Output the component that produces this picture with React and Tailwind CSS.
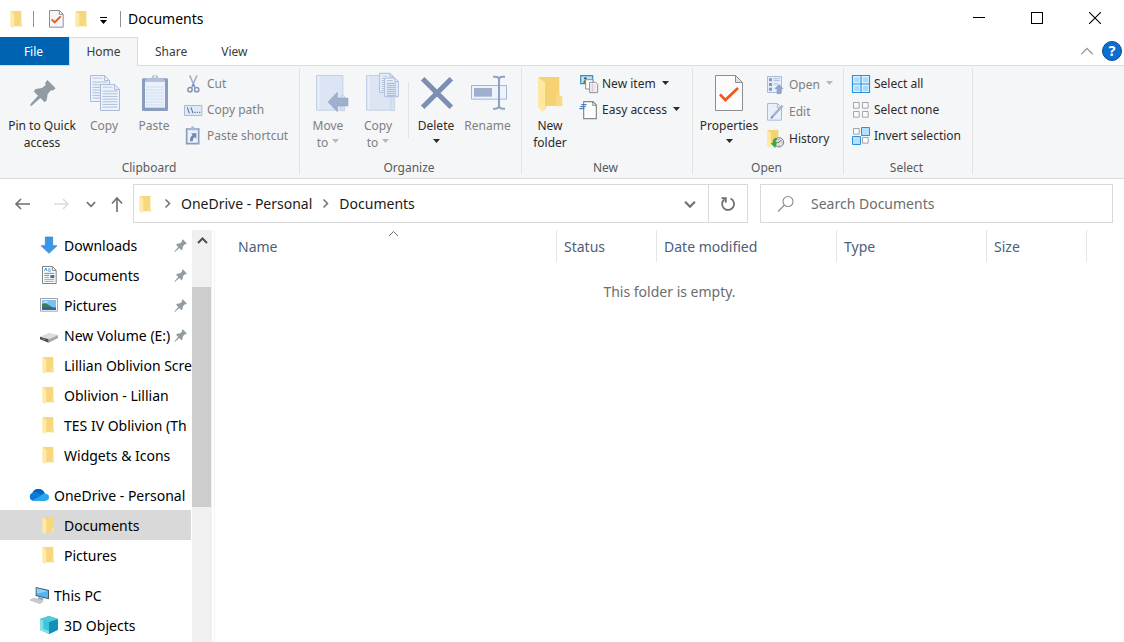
import { useState } from "react";

/* ---------- shared glyphs ---------- */

function Caret({ className = "" }) {
  return (
    <svg className={className} width="7" height="4" viewBox="0 0 7 4" fill="currentColor">
      <path d="M0 0h7L3.5 4z" />
    </svg>
  );
}

function Chevron({ dir = "down", size = 11, weight = 1.5 }) {
  const paths = {
    down: "M1 3.5l4.5 4.5L10 3.5",
    up: "M1 8l4.5-4.5L10 8",
    right: "M3.5 1.5l4 4-4 4",
  };
  return (
    <svg width={size} height={size} viewBox="0 0 11 11" fill="none" stroke="currentColor" strokeWidth={weight}>
      <path d={paths[dir]} />
    </svg>
  );
}

function BigIcon({ children }) {
  return (
    <svg className="overflow-visible" width="40" height="40" viewBox="0 0 120 120" fill="none">
      {children}
    </svg>
  );
}

function SmallIcon({ children }) {
  return (
    <svg className="shrink-0 overflow-visible" width="18" height="18" viewBox="0 0 54 54" fill="none">
      {children}
    </svg>
  );
}

function FolderIcon() {
  return (
    <SmallIcon>
      <path d="M9 3h31v34h2v12H16z" fill="#f7d77c" />
      <path d="M35 36h7v13h-7z" fill="#fbe19a" />
      <path d="M7 3l12 8v35l-5 8-7-6z" fill="#ffe9a6" />
    </SmallIcon>
  );
}

function PinShape() {
  return (
    <path
      d="M76 18l-7 10 3 4-12 10-19 3-6 7 13 13L25 91v4h4l26-23 13 13 6-6 3-19 11-12 4 2 9-7z"
      fill="#909ba2"
    />
  );
}

function Sheet({ x, y, w, h, stroke = "#a9bbd8", fill = "#edf3fc", line = "#a3b4d1", step = 8 }) {
  const fold = w * 0.26;
  const rows = [];
  for (let ly = y + fold + 5; ly < y + h - 4; ly += step) rows.push(ly);
  return (
    <>
      <path d={`M${x} ${y}h${w - fold}l${fold} ${fold}v${h - fold}h${-w}z`} fill={fill} stroke={stroke} strokeWidth="3" />
      <path d={`M${x + w - fold} ${y}v${fold}h${fold}`} stroke={stroke} strokeWidth="3" />
      <path d={`M${x + 6} ${y + 8}h${w - fold - 12}`} stroke={line} strokeWidth="2" />
      {rows.map((ly) => (
        <path key={ly} d={`M${x + 6} ${ly}h${w - 12}`} stroke={line} strokeWidth="2.5" />
      ))}
    </>
  );
}

/* ---------- large ribbon icons ---------- */

const big = {
  pin: (
    <BigIcon>
      <PinShape />
    </BigIcon>
  ),
  copy: (
    <BigIcon>
      <Sheet x={19.5} y={4.5} w={57} h={78} />
      <Sheet x={49.5} y={31.5} w={57} h={78} />
    </BigIcon>
  ),
  paste: (
    <BigIcon>
      <rect x="24" y="13" width="78" height="98" rx="4" fill="#8b9dbf" />
      <path d="M33 22h60v79H33z" fill="#eaf1fc" />
      <path d="M36 39h54M36 48h54M36 57h54M36 66h54M36 75h54M36 84h54M36 93h54" stroke="#cdd8ea" strokeWidth="2.5" />
      <path d="M33 23v-4l7-6h13a9 10 0 0 1 20 0h13l7 6v4z" fill="#b3c1da" />
      <circle cx="63" cy="8" r="4" fill="#dfe7f4" />
    </BigIcon>
  ),
  move: (
    <BigIcon>
      <path d="M25.500 4.500h79v104h-79z" fill="#dbe5f4" stroke="#c3d1e8" strokeWidth="3" />
      <path d="M32 6v101" stroke="#e8eff9" strokeWidth="5" />
      <path d="M98 69q0-6 6-6t6 6v41H98z" fill="#d5e0f1" stroke="#bfcde4" strokeWidth="2" />
      <path d="M60 84l28-29v17h32v24H88v17z" fill="#9fb0ce" stroke="#8c9fc2" strokeWidth="1.5" />
    </BigIcon>
  ),
  copyTo: (
    <BigIcon>
      <path d="M25.500 4.500h79v104h-79z" fill="#dbe5f4" stroke="#c3d1e8" strokeWidth="3" />
      <path d="M32 6v101" stroke="#e8eff9" strokeWidth="5" />
      <path d="M98 74q0-6 6-6t6 6v36H98z" fill="#d5e0f1" stroke="#bfcde4" strokeWidth="2" />
      <Sheet x={65} y={-2} w={41} h={57} step={6} />
      <Sheet x={80} y={12} w={41} h={56} step={6} line="#8d9fc0" />
    </BigIcon>
  ),
  remove: (
    <BigIcon>
      <path d="M20 14l86 86M106 14l-86 86" stroke="#7b8eb3" strokeWidth="15" />
    </BigIcon>
  ),
  rename: (
    <BigIcon>
      <path d="M10.500 34.500h105v41h-105z" fill="#edf3fc" stroke="#a4b5d3" strokeWidth="3" />
      <path d="M18 42h54v26H18z" fill="#9fb0ce" />
      <path d="M75 8h7q11 0 11 10 0-10 11-10h7M93 16v80M75 104h7q11 0 11-10 0 10 11 10h7" stroke="#8fa1c2" strokeWidth="6" />
    </BigIcon>
  ),
  folder: (
    <BigIcon>
      <path d="M26 9h62v55h-2v32H42z" fill="#f5d272" />
      <path d="M78 62q0-5 7-5h4v8q8 0 8 7v25H78z" fill="#f8da86" />
      <path d="M24 9l23 17v78l-8 9-15-13z" fill="#ffe8a2" />
      <path d="M47 26v78" stroke="#ecc661" strokeWidth="2" />
    </BigIcon>
  ),
  properties: (
    <BigIcon>
      <path d="M19.500 4.500h60l21 21v84h-81z" fill="#fcfcfc" stroke="#8b8f92" strokeWidth="3" />
      <path d="M79.500 4.500v21h21z" fill="#dfe1e3" stroke="#8b8f92" strokeWidth="3" />
      <path d="M33 61l16 17 38-36" stroke="#f2571a" strokeWidth="8" />
    </BigIcon>
  ),
};

/* ---------- small ribbon icons ---------- */

const small = {
  cut: (
    <SmallIcon>
      <path d="M14 1l14 32M36 1L22 33" stroke="#a3b3ce" strokeWidth="5" />
      <circle cx="15" cy="44" r="6.500" stroke="#8295b8" strokeWidth="4.500" />
      <circle cx="35" cy="44" r="6.500" stroke="#8295b8" strokeWidth="4.500" />
      <path d="M20 38l5-10 5 10" stroke="#8295b8" strokeWidth="4" />
    </SmallIcon>
  ),
  path: (
    <SmallIcon>
      <path d="M-1.500 13.500h52v30h-52z" fill="#e0e9f8" stroke="#a9bbd8" strokeWidth="3" />
      <path d="M7 19l6 18M18 19l6 18" stroke="#54698f" strokeWidth="3" />
      <path d="M28 34h4M35 34h4M42 34h4" stroke="#54698f" strokeWidth="3" />
    </SmallIcon>
  ),
  shortcut: (
    <SmallIcon>
      <path d="M5 6h36v44H5z" fill="#eaf1fc" stroke="#8b9dbf" strokeWidth="5" />
      <path d="M12 10V4h6a5 6 0 0 1 10 0h6v6z" fill="#a9b8d3" />
      <path d="M18 19h16v16l-5-5q-6 4-6 13h-8q-1-13 8-19z" fill="#7287b0" />
    </SmallIcon>
  ),
  newItem: (
    <SmallIcon>
      <path d="M2 2h36v24H2z" fill="#b9e2f7" stroke="#3d8fb5" strokeWidth="3.500" />
      <circle cx="16" cy="10" r="3.500" fill="#445" />
      <path d="M10 24q0-9 7-9t7 9z" fill="#567a3c" />
      <path d="M17 14h22v28H17z" fill="#fff" stroke="#8b8f92" strokeWidth="3" />
      <path d="M29 22h18l6 6v25H29z" fill="#fff" stroke="#8b8f92" strokeWidth="3" />
      <path d="M33 30h16M33 36h16M33 42h16M33 48h16" stroke="#b5b9d8" strokeWidth="2" />
      <path d="M37 24v28" stroke="#e3a0a0" strokeWidth="1.500" />
    </SmallIcon>
  ),
  easy: (
    <SmallIcon>
      <path d="M11 2h28l10 10v41H11z" fill="#fdfdfd" stroke="#85898c" strokeWidth="3.500" />
      <path d="M38 2v11h11" stroke="#85898c" strokeWidth="3" />
      <path d="M4 11h16M1 17h16M-2 23h15" stroke="#2a6fae" strokeWidth="3" />
    </SmallIcon>
  ),
  open: (
    <SmallIcon>
      <path d="M1.500 1.500h42v48h-42z" fill="#e6eefb" stroke="#a9bbd8" strokeWidth="3" />
      <path d="M6 7h9v9H6zM6 21h9v9H6zM6 35h9v9H6z" fill="#8497ba" />
      <path d="M20 8h18M20 14h18M20 24h12" stroke="#a9bbd8" strokeWidth="3" />
      <path d="M36 24l14 15h-7v15H29V39h-7z" fill="#93a5c6" />
    </SmallIcon>
  ),
  edit: (
    <SmallIcon>
      <path d="M1.500 1.500h30l12 12v38h-42z" fill="#e9f0fb" stroke="#a9bbd8" strokeWidth="3" />
      <path d="M31 2v12h12" stroke="#a9bbd8" strokeWidth="3" />
      <path d="M14 43L47 8" stroke="#a4b5d1" strokeWidth="7" />
      <path d="M10 48l4-9 5 5z" fill="#7287b0" />
    </SmallIcon>
  ),
  history: (
    <SmallIcon>
      <path d="M0 0h34v45H10z" fill="#f5d273" />
      <path d="M0 0l12 9v38l-4 6-8-5z" fill="#ffe9a3" />
      <circle cx="36" cy="37" r="14" fill="#dfe3e3" stroke="#7f8688" strokeWidth="3" />
      <path d="M36 37l7-7M36 37h-5" stroke="#3f4648" strokeWidth="2.500" />
      <path d="M36 27v2M36 45v2M44 37h2M29 31l1 1" stroke="#3f4648" strokeWidth="2" />
      <path d="M25 24q-9 6-7 16h-6l12 13 6-16h-5q-1-6 6-9z" fill="#2fae3e" stroke="#1c8c2c" strokeWidth="1" />
    </SmallIcon>
  ),
  all: (
    <SmallIcon>
      <path d="M1.500 1.500h51v51h-51z" fill="#dff2ff" />
      <path d="M7 7h15v15H7zM33 7h15v15H33zM7 33h15v15H7zM33 33h15v15H33z" fill="#a6dbff" />
      <path d="M1.500 1.500h51v51h-51zM27 2v50M2 27h50" stroke="#2f8fdf" strokeWidth="3.500" />
    </SmallIcon>
  ),
  none: (
    <SmallIcon>
      <path d="M4.500 4.500h17v17h-17zM31.500 4.500h17v17h-17zM4.500 31.500h17v17h-17zM31.500 31.500h17v17h-17z" fill="#fafafa" stroke="#a3a5a7" strokeWidth="3" />
    </SmallIcon>
  ),
  invert: (
    <SmallIcon>
      <path d="M4.500 4.500h17v17h-17zM31.500 31.500h17v17h-17z" fill="#fafafa" stroke="#a3a5a7" strokeWidth="3" />
      <path d="M28.500 1.500h24v24h-24zM1.500 28.500h24v24h-24z" fill="#b3e0ff" stroke="#2f8fdf" strokeWidth="3" />
    </SmallIcon>
  ),
};

/* ---------- navigation tree icons ---------- */

const tree = {
  folder: <FolderIcon />,
  downloads: (
    <SmallIcon>
      <path d="M16 3h22v26h13L27 52 3 29h13z" fill="#3a97e8" stroke="#2980cf" strokeWidth="2" />
    </SmallIcon>
  ),
  documents: (
    <SmallIcon>
      <path d="M7.500 1.500h30l11 11v40h-41z" fill="#fff" stroke="#7f8487" strokeWidth="3" />
      <path d="M37 2v11h11" stroke="#7f8487" strokeWidth="3" />
      <path d="M13 15l5-9 3 9M24 9h8M24 15h9M13 22h30M13 28h14" stroke="#2a7fc0" strokeWidth="2.500" />
      <path d="M31 27h12v9H31z" fill="#4a6f96" />
      <path d="M13 34h14M13 40h30M13 46h30" stroke="#8c9093" strokeWidth="2.500" />
    </SmallIcon>
  ),
  pictures: (
    <SmallIcon>
      <path d="M1.500 7.500h51v38h-51z" fill="#fff" stroke="#a2a5a8" strokeWidth="3" />
      <path d="M6 12h42v29H6z" fill="#7cc0f0" />
      <path d="M8 20q8-7 18-2z" fill="#e8f5ff" />
      <path d="M6 24q10-6 22 4t20 6v7H6z" fill="#3d7a63" />
      <path d="M6 35q20-3 42 1v5H6z" fill="#2c5fa0" />
    </SmallIcon>
  ),
  drive: (
    <SmallIcon>
      <path d="M0 32l27-12 27 7-28 13z" fill="#dcdddd" />
      <path d="M0 32l26 8v10L0 40z" fill="#4b4d4e" />
      <path d="M26 40l28-13v9L26 50z" fill="#a5a7a8" />
      <path d="M8 39l6 2" stroke="#4fd36a" strokeWidth="3" />
    </SmallIcon>
  ),
  onedrive: (
    <svg width="20" height="18" viewBox="0 0 60 54">
      <path d="M12 44a12 12 0 0 1-2-23 20 20 0 0 1 37 1l3 1a11 11 0 0 1-1 21z" fill="#1490df" />
      <path d="M10 21a20 20 0 0 1 37 1q-8 0-12 5L22 19q-6-1-12 2z" fill="#0364b8" />
      <path d="M10 21q6-3 12 0l14 8-26 14A12 12 0 0 1 10 21z" fill="#0f78d4" />
      <path d="M11 43l27-15q5-5 12-4a10 10 0 0 1 0 20H13z" fill="#28a8ea" />
    </svg>
  ),
  pc: (
    <svg width="20" height="18" viewBox="0 0 60 54">
      <path d="M20 3l40 9v28L20 30z" fill="#49586a" />
      <path d="M23 7l34 8v21l-34-8z" fill="#54b4f3" />
      <path d="M23 7l34 8-34 8z" fill="#8ed2fa" />
      <path d="M30 33l14 4-4 6-14-4z" fill="#9aa1a8" />
      <path d="M3 42l12-5 28 8-10 8z" fill="#c9cdd1" stroke="#a6abb0" strokeWidth="1.500" />
    </svg>
  ),
  objects: (
    <SmallIcon>
      <path d="M27 0l27 9v32L27 54 0 41V9z" fill="#22b3cc" />
      <path d="M0 9l27 9v36L0 41z" fill="#7fe0e8" />
      <path d="M27 18l27-9v32L27 54z" fill="#1190b8" />
      <path d="M27 0l27 9-27 9L0 9z" fill="#4fcbdb" />
      <path d="M10 12l17 6v27L10 38z" fill="#3fc3d8" />
    </SmallIcon>
  ),
};

/* ---------- title bar and tabs ---------- */

function TitleBar() {
  return (
    <header className="flex h-[37px] items-center">
      <div className="flex items-center pl-2">
        <FolderIcon />
        <span className="ml-[7px] h-4 w-px bg-[#919191]" />
        <button className="ml-[13px] flex" aria-label="Properties">
          <SmallIcon>
            <path d="M7.500 1.500h30l11 11v39h-41z" fill="#f7f7f7" stroke="#8b8f92" strokeWidth="3" />
            <path d="M37 2v11h11" stroke="#8b8f92" strokeWidth="3" />
            <path d="M14 28l9 9 18-18" stroke="#f2571a" strokeWidth="6" />
          </SmallIcon>
        </button>
        <button className="ml-2 flex" aria-label="New folder">
          <FolderIcon />
        </button>
        <button className="ml-[9px] flex flex-col items-center gap-[2px] pt-1" aria-label="Customize Quick Access Toolbar">
          <span className="h-px w-[7px] bg-black" />
          <Caret />
        </button>
        <span className="ml-[13px] h-4 w-px bg-[#919191]" />
        <h1 className="ml-[7px] text-[14px]">Documents</h1>
      </div>
      <div className="ml-auto flex h-full pb-[2px]">
        <button className="flex w-[58px] items-center justify-center" aria-label="Minimize">
          <span className="h-px w-3 bg-black" />
        </button>
        <button className="flex w-[58px] items-center justify-center" aria-label="Maximize">
          <span className="size-3 border border-black" />
        </button>
        <button className="flex w-[58px] items-center justify-center" aria-label="Close">
          <svg width="12" height="12" viewBox="0 0 12 12" stroke="#000" strokeWidth="1.1">
            <path d="M0 0l12 12M12 0L0 12" />
          </svg>
        </button>
      </div>
    </header>
  );
}

function Tabs({ active, onSelect }) {
  return (
    <div className="relative flex h-7 items-stretch text-[12px] text-[#3b3b3b]">
      <span className="absolute inset-x-0 -bottom-px h-px bg-[#dadbdc]" />
      <button className="w-[69px] bg-[#0063b1] pt-[2px] pr-[2px] text-white">File</button>
      {["Home", "Share", "View"].map((tab) => (
        <button
          key={tab}
          onClick={() => onSelect(tab)}
          className={
            tab === active
              ? "relative -mb-px w-[69px] border-x border-t border-[#dadbdc] bg-[#f5f6f7]"
              : "px-[17px] pt-[2px]"
          }
        >
          {tab}
        </button>
      ))}
      <div className="ml-auto flex items-center gap-2 pr-[2px]">
        <button className="flex text-[#9a9a9a]" aria-label="Minimize the Ribbon">
          <Chevron dir="up" size={14} weight={1} />
        </button>
        <button
          className="flex size-5 items-center justify-center rounded-full border border-[#0a4f8c] bg-[#0a6fd0] text-[14px] font-bold leading-none text-white"
          aria-label="Help"
        >
          ?
        </button>
      </div>
    </div>
  );
}

/* ---------- ribbon ---------- */

function Group({ label, className, children }) {
  return (
    <section className={`relative flex shrink-0 flex-col ${className}`}>
      <div className="flex flex-1">{children}</div>
      <h2 className="pb-[2px] text-center leading-4 text-[#5a5a5a]">{label}</h2>
      <span className="absolute right-0 top-[2px] bottom-1 w-px bg-[#e2e3e4]" />
    </section>
  );
}

function BigButton({ icon, lines, caret, disabled, className = "w-[50px]" }) {
  return (
    <button
      disabled={disabled}
      className={`flex flex-col items-center pt-2 leading-[17px] whitespace-nowrap ${disabled ? "text-[#7f7f7f]" : "text-[#2b2b2b]"} ${className}`}
    >
      {big[icon]}
      <span className="mt-[3px]">{lines[0]}</span>
      <span className="flex h-[17px] items-center gap-1">
        {lines[1]}
        {caret && <Caret className={disabled ? "mb-[3px] text-[#b8b8b8]" : "mb-1"} />}
      </span>
    </button>
  );
}

function SmallButton({ icon, label, caret, disabled }) {
  return (
    <button
      disabled={disabled}
      className={`flex flex-1 items-center gap-1 whitespace-nowrap ${disabled ? "text-[#7f7f7f]" : "text-[#2b2b2b]"}`}
    >
      {small[icon]}
      {label}
      {caret && <Caret className={disabled ? "mb-[3px] ml-[2px] text-[#b8b8b8]" : "mb-[3px] ml-[2px]"} />}
    </button>
  );
}

function Ribbon() {
  return (
    <div className="flex h-[114px] overflow-hidden border-b border-[#dadbdc] bg-[#f5f6f7] pt-px text-[12px]">
      <Group label="Clipboard" className="w-[300px] pr-[5px] pl-[3px]">
        <BigButton icon="pin" lines={["Pin to Quick", "access"]} className="w-[78px]" />
        <BigButton icon="copy" lines={["Copy"]} disabled className="w-[46px]" />
        <BigButton icon="paste" lines={["Paste"]} disabled className="w-[54px]" />
        <div className="mt-[5px] flex h-[78px] flex-col pl-1">
          <SmallButton icon="cut" label="Cut" disabled />
          <SmallButton icon="path" label="Copy path" disabled />
          <SmallButton icon="shortcut" label="Paste shortcut" disabled />
        </div>
      </Group>
      <Group label="Organize" className="w-[222px] pr-[7px] pl-[3px]">
        <BigButton icon="move" lines={["Move", "to"]} caret disabled />
        <BigButton icon="copyTo" lines={["Copy", "to"]} caret disabled />
        <span className="mt-4 ml-[5px] mr-[2px] h-14 w-px bg-[#e2e3e4]" />
        <BigButton icon="remove" lines={["Delete"]} caret />
        <BigButton icon="rename" lines={["Rename"]} disabled className="w-[53px]" />
      </Group>
      <Group label="New" className="w-[171px] pr-[7px] pl-[3px]">
        <BigButton icon="folder" lines={["New", "folder"]} />
        <div className="mt-[5px] flex h-[52px] flex-col pl-[5px]">
          <SmallButton icon="newItem" label="New item" caret />
          <SmallButton icon="easy" label="Easy access" caret />
        </div>
      </Group>
      <Group label="Open" className="w-[151px] pr-[7px] pl-[3px]">
        <BigButton icon="properties" lines={["Properties"]} caret className="w-[66px]" />
        <div className="mt-[5px] flex h-[81px] flex-col pl-[5px]">
          <SmallButton icon="open" label="Open" caret disabled />
          <SmallButton icon="edit" label="Edit" disabled />
          <SmallButton icon="history" label="History" />
        </div>
      </Group>
      <Group label="Select" className="w-[129px] pr-3 pl-2">
        <div className="mt-[5px] flex h-[78px] flex-col">
          <SmallButton icon="all" label="Select all" />
          <SmallButton icon="none" label="Select none" />
          <SmallButton icon="invert" label="Invert selection" />
        </div>
      </Group>
    </div>
  );
}

/* ---------- address row ---------- */

function Arrow({ d, color = "#6f6f6f" }) {
  return (
    <svg width="16" height="16" viewBox="0 0 16 16" fill="none" stroke={color} strokeWidth="1.6">
      <path d={d} />
    </svg>
  );
}

function AddressRow() {
  return (
    <div className="flex h-[51px] pt-[5px] pr-[11px] pb-[7px] text-[14px]">
      <div className="flex w-[133px] shrink-0 items-center pl-[14px] text-[#6f6f6f]">
        <button aria-label="Back">
          <Arrow d="M16 8H2M7 3L2 8l5 5" />
        </button>
        <button className="ml-6" aria-label="Forward" disabled>
          <Arrow d="M0 8h14M9 3l5 5-5 5" color="#dcdcdc" />
        </button>
        <button className="ml-4" aria-label="Recent locations">
          <Chevron size={10} weight={1.8} />
        </button>
        <button className="ml-[13px]" aria-label="Up">
          <Arrow d="M8 16V2M3 7.500L8 2l5 5.500" />
        </button>
      </div>
      <div className="flex flex-1 border border-[#d9d9d9]">
        <nav className="flex flex-1 items-center pl-[3px] text-[#1a1a1a]">
          <FolderIcon />
          <span className="ml-[7px] text-[#6f6f6f]">
            <Chevron dir="right" />
          </span>
          <a href="#onedrive" className="ml-2">OneDrive - Personal</a>
          <span className="ml-2 text-[#6f6f6f]">
            <Chevron dir="right" />
          </span>
          <a href="#documents" className="ml-2">Documents</a>
        </nav>
        <button className="flex w-9 items-center justify-center text-[#6f6f6f]" aria-label="Previous locations">
          <Chevron size={12} weight={2} />
        </button>
        <button className="flex w-[39px] items-center justify-center border-l border-[#d9d9d9]" aria-label="Refresh">
          <svg width="16" height="16" viewBox="0 0 16 16" fill="none" stroke="#6f6f6f" strokeWidth="1.8">
            <path d="M10.500 2.500A6 6 0 1 1 4.500 3.200M1.500 2.200h4.300v4.500" />
          </svg>
        </button>
      </div>
      <label className="ml-3 flex w-[353px] items-center border border-[#d9d9d9] pl-4">
        <svg width="18" height="18" viewBox="0 0 18 18" fill="none" stroke="#8a8a8a" strokeWidth="1.1">
          <circle cx="11" cy="6.500" r="5" />
          <path d="M7.500 10L1 16.500" />
        </svg>
        <input
          type="text"
          aria-label="Search Documents"
          placeholder="Search Documents"
          className="ml-4 min-w-0 flex-1 outline-none placeholder:text-[#6d6d6d]"
        />
      </label>
    </div>
  );
}

/* ---------- navigation pane ---------- */

const sections = [
  [
    { icon: "downloads", label: "Downloads", pinned: true },
    { icon: "documents", label: "Documents", pinned: true },
    { icon: "pictures", label: "Pictures", pinned: true },
    { icon: "drive", label: "New Volume (E:)", pinned: true },
    { icon: "folder", label: "Lillian Oblivion Scre" },
    { icon: "folder", label: "Oblivion - Lillian" },
    { icon: "folder", label: "TES IV Oblivion (Th" },
    { icon: "folder", label: "Widgets & Icons" },
  ],
  [
    { icon: "onedrive", label: "OneDrive - Personal", root: true },
    { icon: "folder", label: "Documents", selected: true },
    { icon: "folder", label: "Pictures" },
  ],
  [
    { icon: "pc", label: "This PC", root: true },
    { icon: "objects", label: "3D Objects" },
  ],
];

function TreeItem({ icon, label, pinned, root, selected }) {
  return (
    <li>
      <a
        href="#folder"
        className={`flex h-[30px] items-center whitespace-nowrap ${root ? "gap-[5px] pl-[29px]" : "gap-[6px] pl-10"} ${selected ? "bg-[#d9d9d9]" : ""}`}
      >
        <span className="shrink-0">{tree[icon]}</span>
        <span className={pinned ? "w-[107px]" : ""}>{label}</span>
        {pinned && (
          <svg className="-ml-1 shrink-0" width="15" height="15" viewBox="16 12 92 88">
            <PinShape />
          </svg>
        )}
      </a>
    </li>
  );
}

function Sidebar() {
  return (
    <aside className="flex w-[212px] shrink-0 gap-px">
      <nav className="flex w-[191px] flex-col gap-[10px] text-[14px] text-black">
        {sections.map((items, i) => (
          <ul key={i}>
            {items.map((item) => (
              <TreeItem key={item.label} {...item} />
            ))}
          </ul>
        ))}
      </nav>
      <div className="flex w-5 flex-col bg-[#f0f0f0] text-[#4f4f4f]">
        <button className="flex h-[57px] items-start justify-center pt-[5px]" aria-label="Scroll up">
          <Chevron dir="up" size={11} weight={2} />
        </button>
        <div className="mr-px h-[220px] bg-[#cdcdcd]" />
      </div>
    </aside>
  );
}

/* ---------- file list ---------- */

function FileList() {
  const columns = [
    { label: "Status", width: "w-[100px]" },
    { label: "Date modified", width: "w-[180px]" },
    { label: "Type", width: "w-[150px]" },
    { label: "Size", width: "w-[100px]" },
  ];
  return (
    <main className="ml-[2px] flex-1 overflow-hidden border-l border-[#f3f3f3] text-[14px]">
      <table className="w-[872px] table-fixed text-left text-[#4c607a]">
        <thead>
          <tr className="h-8">
            <th className="relative border-r border-[#e5e5e5] pl-[23px] font-normal">
              Name
              <span className="absolute inset-x-0 top-[-2px] flex justify-center pl-4 text-[#6f6f6f]">
                <Chevron dir="up" weight={1} />
              </span>
            </th>
            {columns.map((col) => (
              <th key={col.label} className={`border-r border-[#e5e5e5] pl-[7px] font-normal ${col.width}`}>
                {col.label}
              </th>
            ))}
          </tr>
        </thead>
      </table>
      <p className="mt-[19px] text-center text-[#6d6d6d]">This folder is empty.</p>
    </main>
  );
}

export default function App() {
  const [tab, setTab] = useState("Home");
  return (
    <div className="flex h-screen flex-col overflow-hidden bg-white font-['Noto_Sans',sans-serif]">
      <TitleBar />
      <Tabs active={tab} onSelect={setTab} />
      <Ribbon />
      <AddressRow />
      <div className="flex min-h-0 flex-1">
        <Sidebar />
        <FileList />
      </div>
    </div>
  );
}
